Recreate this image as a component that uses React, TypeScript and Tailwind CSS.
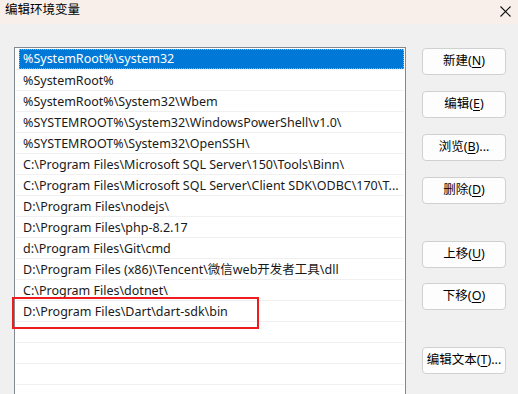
import React from "react";

const paths = [
  "%SystemRoot%\\system32",
  "%SystemRoot%",
  "%SystemRoot%\\System32\\Wbem",
  "%SYSTEMROOT%\\System32\\WindowsPowerShell\\v1.0\\",
  "%SYSTEMROOT%\\System32\\OpenSSH\\",
  "C:\\Program Files\\Microsoft SQL Server\\150\\Tools\\Binn\\",
  "C:\\Program Files\\Microsoft SQL Server\\Client SDK\\ODBC\\170\\T...",
  "D:\\Program Files\\nodejs\\",
  "D:\\Program Files\\php-8.2.17",
  "d:\\Program Files\\Git\\cmd",
  "D:\\Program Files (x86)\\Tencent\\微信web开发者工具\\dll",
  "C:\\Program Files\\dotnet\\",
  "D:\\Program Files\\Dart\\dart-sdk\\bin",
  "",
  "",
  "",
  "",
];

const Btn = ({
  label,
  k,
  tail = "",
  className = "",
}: {
  label: string;
  k: string;
  tail?: string;
  className?: string;
}) => (
  <div
    className={`w-[84px] h-[27px] shrink-0 rounded-[4px] border border-[#d0d0d0] bg-[#fdfdfd] flex items-center justify-center text-[12.5px] text-black ${className}`}
  >
    <span>
      {label}(<span className="underline underline-offset-2">{k}</span>){tail}
    </span>
  </div>
);

export default function App() {
  return (
    <div
      className="relative w-[518px] h-[394px] overflow-hidden bg-[#f0f0f0] flex flex-col"
      style={{ fontFamily: '"Noto Sans", "Noto Sans CJK SC", sans-serif' }}
    >
      <div className="h-[24px] shrink-0 bg-[#f8efea] flex items-center justify-between pl-[5px] pr-[7px]">
        <span className="text-[12.5px] text-black leading-none mt-[-3px]">编辑环境变量</span>
        <svg width="11" height="11" viewBox="0 0 11 11" className="mt-[-2px]">
          <path d="M0.5 0.5 L10.5 10.5 M10.5 0.5 L0.5 10.5" stroke="#111" strokeWidth="1.1" />
        </svg>
      </div>

      <div className="flex flex-1 pl-[14px] pt-[23px]">
        <div className="w-[392px] border border-b-0 border-[#828790] bg-white pt-px pl-px pr-px flex flex-col">
          {paths.map((p, i) => (
            <div key={i} className="h-[21px] shrink-0 border-b border-[#f0f0f0] pt-px">
              {i === 0 ? (
                <div className="h-[20px] ml-[3px] mt-[-1px] bg-[#0078d7] outline-1 outline-dotted outline-offset-[-1px] outline-[#f0a040] flex items-center pl-[4px] text-[12.5px] text-white whitespace-nowrap overflow-hidden">
                  {p}
                </div>
              ) : (
                <div className="h-[20px] flex items-center pl-[7px] text-[12.5px] text-[#1a1a1a] whitespace-nowrap overflow-hidden">
                  {p}
                </div>
              )}
            </div>
          ))}
        </div>

        <div className="ml-[16px] flex flex-col pt-px">
          <Btn label="新建" k="N" />
          <Btn label="编辑" k="E" className="mt-[16px]" />
          <Btn label="浏览" k="B" tail="..." className="mt-[16px]" />
          <Btn label="删除" k="D" className="mt-[16px]" />
          <Btn label="上移" k="U" className="mt-[37px]" />
          <Btn label="下移" k="O" className="mt-[15px]" />
          <Btn label="编辑文本" k="T" tail="..." className="mt-[37px]" />
        </div>
      </div>

      <div className="absolute left-[12px] top-[297px] w-[247px] h-[32px] border-2 border-[#ee1c1c]" />
    </div>
  );
}
